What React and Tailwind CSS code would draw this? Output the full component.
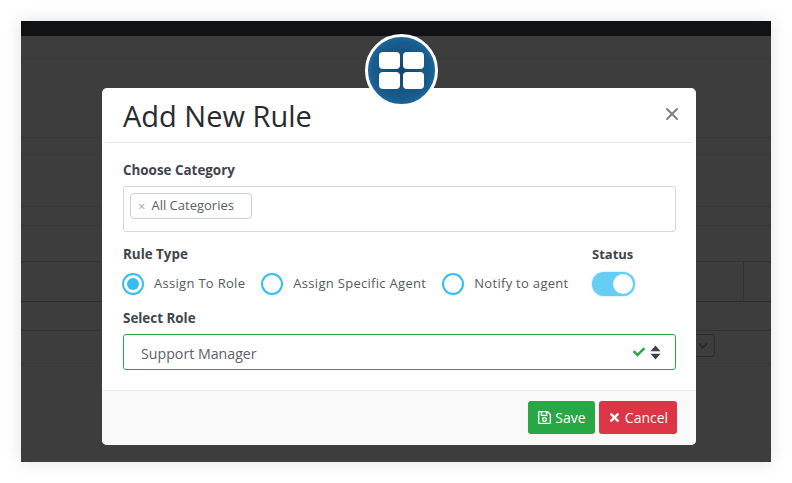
import React from 'react';
import { X } from 'lucide-react';
import { FaCheck, FaRegSave, FaTimes } from 'react-icons/fa';

const fontFamily = { fontFamily: '"Open Sans", "Noto Sans", sans-serif' };

const RadioOption = ({ label, checked }) => (
    <div className="flex items-center gap-[10px]">
        <div className="w-[22px] h-[22px] rounded-full border-2 border-[#38bdf2] bg-white flex items-center justify-center">
            {checked && <div className="w-[12px] h-[12px] rounded-full bg-[#38bdf2]"></div>}
        </div>
        <span className="text-[13px] text-[#555a61] tracking-[0.3px]">{label}</span>
    </div>
);

const Backdrop = () => (
    <div className="w-[750px] h-[441px] bg-[#3d3d3d] shadow-[0_0_16px_rgba(0,0,0,0.12)] flex flex-col">
        <div className="h-[15px] bg-[#111214]"></div>
        <div className="h-[23px] border-b border-[#383838]"></div>
        <div className="h-[79px] border-b border-[#383838]"></div>
        <div className="h-[17px] border-b border-[#383838]"></div>
        <div className="h-[52px] border-b border-[#383838]"></div>
        <div className="h-[19px] border-b border-[#383838]"></div>
        <div className="h-[36px] border-b border-[#333333]"></div>
        <div className="h-[40px] border-b border-[#2e2e2e] flex justify-end">
            <div className="w-[28px] border-l border-[#333333]"></div>
        </div>
        <div className="h-[29px] border-b border-[#333333]"></div>
        <div className="h-[33px] border-b border-[#383838]"></div>
    </div>
);

const App = () => {
    return (
        <div className="relative w-[792px] h-[483px] bg-white pt-[21px] pl-[21px] overflow-hidden" style={fontFamily}>
            <Backdrop />

            {/* small select peeking out beside the modal */}
            <div className="absolute left-[690px] top-[334px] w-[25px] h-[23px] rounded-[3px] border border-[#2b2b2b] flex items-center justify-center">
                <svg width="12" height="8" viewBox="0 0 12 8" fill="none" stroke="#262626" strokeWidth="1.6"><path d="M2 1.5l4 4 4-4" /></svg>
            </div>

            {/* Modal */}
            <div className="absolute left-[102px] top-[88px] w-[594px] h-[357px] bg-white rounded-[5px] flex flex-col">
                <div className="h-[55px] mx-[4px] pl-[17px] pr-[10px] border-b border-[#e6e8ea] flex items-center justify-between shrink-0">
                    <h2 className="text-[29px] leading-none text-[#272b30]">Add New Rule</h2>
                    <X className="w-[20px] h-[20px] text-[#7b8087] mt-[-2px]" strokeWidth={2.25} />
                </div>

                <div className="flex-1 px-[21px] pt-[19px]">
                    <label className="block text-[13.4px] leading-[16px] font-bold text-[#40454c]">Choose Category</label>
                    <div className="mt-[8px] w-[553px] h-[46px] rounded-[3px] border border-[#d4d8dd] p-[6px]">
                        <div className="w-[122px] h-[26px] rounded-[4px] border border-[#c9d0d8] flex items-center pl-[7px] gap-[6px]">
                            <span className="text-[13px] leading-none text-[#a3a8ae]">×</span>
                            <span className="text-[13px] text-[#5b6067]">All Categories</span>
                        </div>
                    </div>

                    <div className="mt-[14px] flex">
                        <div className="w-[469px]">
                            <div className="text-[13.4px] leading-[16px] font-bold text-[#40454c]">Rule Type</div>
                            <div className="mt-[11px] ml-[-1px] flex items-center gap-[16px] h-[22px]">
                                <RadioOption label="Assign To Role" checked />
                                <RadioOption label="Assign Specific Agent" />
                                <RadioOption label="Notify to agent" />
                            </div>
                        </div>
                        <div>
                            <div className="text-[13px] leading-[16px] font-bold text-[#40454c]">Status</div>
                            <div className="mt-[10px] w-[43px] h-[24px] rounded-full bg-[#66cdf5] flex items-center justify-end pr-[2px] shadow-[0_0_2px_rgba(56,189,242,0.6)]">
                                <div className="w-[20px] h-[20px] rounded-full bg-white"></div>
                            </div>
                        </div>
                    </div>

                    <label className="block mt-[14px] text-[13.4px] leading-[16px] font-bold text-[#40454c]">Select Role</label>
                    <div className="mt-[8px] w-[553px] h-[36px] rounded-[3px] border border-[#28a745] flex items-center justify-between pl-[17px] pr-[14px]">
                        <span className="text-[14.2px] text-[#5b6067] pt-[4px]">Support Manager</span>
                        <div className="flex items-center gap-[5px]">
                            <FaCheck className="w-[12px] h-[12px] text-[#28a745]" />
                            <svg width="11" height="15" viewBox="0 0 11 15" fill="#3f444a"><path d="M5.5 0.5L10.5 6.3H0.5Z" /><path d="M5.5 14.5L10.5 8.7H0.5Z" /></svg>
                        </div>
                    </div>
                </div>

                <div className="h-[55px] bg-[#f9f9f9] border-t border-[#e9ebed] rounded-b-[5px] flex items-center justify-end gap-[4px] pr-[19px] pb-[2px] shrink-0">
                    <button className="w-[67px] h-[33px] rounded-[3px] bg-[#28a745] text-white text-[14px] flex items-center justify-center gap-[3px]">
                        <FaRegSave className="w-[15px] h-[15px]" />
                        Save
                    </button>
                    <button className="w-[78px] h-[33px] rounded-[3px] bg-[#dc3545] text-white text-[14px] flex items-center justify-center gap-[4px]">
                        <FaTimes className="w-[13px] h-[13px]" />
                        Cancel
                    </button>
                </div>
            </div>

            {/* Logo badge */}
            <div className="absolute left-[365px] top-[34px] w-[73px] h-[73px] rounded-full border-[3px] border-white bg-[radial-gradient(circle_at_50%_50%,#14466e_0%,#185c8c_60%,#2283bf_100%)] flex items-center justify-center">
                <div className="grid grid-cols-2 gap-[3px]">
                    <div className="w-[21px] h-[17px] rounded-[4px] bg-white"></div>
                    <div className="w-[21px] h-[17px] rounded-[4px] bg-white"></div>
                    <div className="w-[21px] h-[17px] rounded-[4px] bg-white"></div>
                    <div className="w-[21px] h-[17px] rounded-[4px] bg-white"></div>
                </div>
            </div>
        </div>
    );
};

export default App;
